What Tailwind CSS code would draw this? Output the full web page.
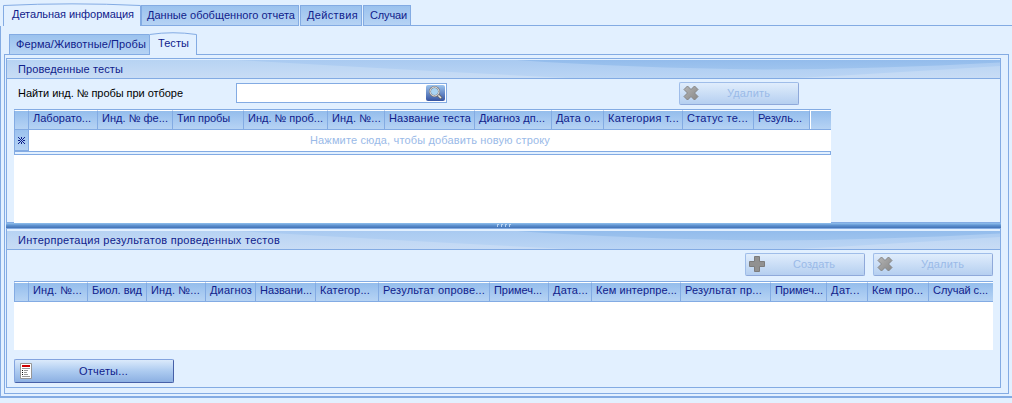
<!DOCTYPE html>
<html lang="ru"><head><meta charset="utf-8"><title>Тесты</title>
<script src="https://cdn.jsdelivr.net/npm/@tailwindcss/browser@4"></script></head>
<body class="w-[1012px] h-[403px] overflow-hidden bg-[#e2f0ff] text-[#10218b] text-[11px] leading-[14px] font-['Liberation_Sans',sans-serif] whitespace-nowrap">
<svg class="absolute size-0"><defs>
<linearGradient id="hb" x2="0" y2="1"><stop stop-color="#93bcec"/><stop offset="1" stop-color="#9fc4ee"/></linearGradient>
<linearGradient id="mb" x2="0" y2="1"><stop stop-color="#a9caf1"/><stop offset="1" stop-color="#bbd5f4"/></linearGradient>
<linearGradient id="lb" x2="0" y2="1"><stop stop-color="#b7d3f3"/><stop offset="1" stop-color="#c8dcf5"/></linearGradient>
<linearGradient id="gr" x2="1" y2="1"><stop stop-color="#b5b5b5"/><stop offset="1" stop-color="#888"/></linearGradient>
<symbol id="swoosh" viewBox="0 0 993 18" preserveAspectRatio="none"><path fill="url(#lb)" d="M0 0H993V18H0z"/><path fill="url(#mb)" d="M230 0H993V6Q880 13 790 18H560Q400 10 230 0z"/><path fill="url(#hb)" d="M510 0H993V2.500Q870 9 760 9.500Q620 8 510 0z"/></symbol>
<symbol id="x" viewBox="0 0 16 16"><path d="M4.500 1L8 4.500 11.500 1 15 4.500 11.500 8 15 11.500 11.500 15 8 11.500 4.500 15 1 11.500 4.500 8 1 4.500z" fill="url(#gr)" stroke="#858585"/></symbol>
</defs></svg>
<div class="flex flex-col h-[403px]">
 <nav class="flex h-[26px] pl-[3px] items-end">
  <div class="relative w-[138px] h-[23px] pl-[9px] pt-[4px]"><svg class="absolute inset-0" width="138" height="23"><path d="M.5 23V2.500Q69-.8 137.500 2.500V23" fill="none" stroke="#83abe3"/></svg><span data-w="122">Детальная информация</span></div>
  <div class="w-[158px] mr-px h-[21px] pl-[5px] pt-[2px] border border-[#83abe3] bg-linear-to-b from-[#9bc2ee] to-[#b6d3f4]"><span data-w="148">Данные обобщенного отчета</span></div>
  <div class="w-[62px] mr-px h-[21px] pl-[6px] pt-[2px] border border-[#83abe3] bg-linear-to-b from-[#9bc2ee] to-[#b6d3f4]"><span data-w="51">Действия</span></div>
  <div class="w-[48px] h-[21px] pl-[6px] pt-[2px] border border-[#83abe3] bg-linear-to-b from-[#9bc2ee] to-[#b6d3f4]"><span data-w="37">Случаи</span></div>
  <div class="flex-1 border-b border-[#83abe3]"></div>
 </nav>
 <main class="h-[372px] border-l border-b-2 border-[#83abe3] pl-[3px] pt-[6px]">
  <nav class="flex items-end h-[23px] pl-[5px]">
   <div class="w-[141px] h-[21px] pl-[6px] pt-[2px] border border-r-0 border-[#83abe3] bg-linear-to-b from-[#9bc2ee] to-[#b6d3f4]"><span data-w="130">Ферма/Животные/Пробы</span></div>
   <div class="relative z-10 w-[48px] h-[23px] -ml-px pl-[9px] pt-[4px] bg-[#e2f0ff]"><svg class="absolute inset-0" width="48" height="23"><path d="M.5 23V2.500Q24-1 47.500 2.500V23" fill="none" stroke="#83abe3"/></svg><span data-w="31">Тесты</span></div>
  </nav>
  <div class="w-[1005px] h-[340px] -mt-px border border-[#83abe3] pl-px pt-[3px]">
   <section class="w-[995px] h-[165px] border border-[#83abe3] pt-px">
    <header class="relative h-[19px] border-b border-[#83abe3] pl-[11px] pt-[2px]"><svg class="absolute inset-0" width="993" height="18"><use href="#swoosh"/></svg><span class="relative" data-w="105">Проведенные тесты</span></header>
    <div class="flex h-[30px] pt-[3px] pl-[11px]">
     <div class="w-[218px] pt-[4px] text-black"><span data-w="165">Найти инд. № пробы при отборе</span></div>
     <div class="w-[211px] h-[20px] mt-px border border-[#83abe3] bg-white flex justify-end p-px">
      <svg width="19" height="16" viewBox="0 0 19 16"><defs><linearGradient id="s" x2="0" y2="1"><stop stop-color="#9cc4ee"/><stop offset="1" stop-color="#3654a2"/></linearGradient></defs><rect width="19" height="16" rx="2" fill="url(#s)"/><path d="M11.500 9.500l4 4" stroke="#666" stroke-width="3"/><path d="M12 10l3 3" stroke="#e8e8e8" stroke-width="1.500"/><circle cx="8.500" cy="6.500" r="4.500" fill="#a9d3f2" stroke="#77777a" stroke-width="2"/><circle cx="8.500" cy="6.500" r="4.500" fill="none" stroke="#e4e4e4"/></svg></div>
     <button class="ml-[232px] w-[120px] h-[23px] pb-px rounded-[2px] border border-[#9fbde9] border-r-[#8fa9da] border-b-[#8fa9da] bg-linear-to-b from-[#e0edfc] to-[#b5cff0] flex items-center text-[#9abae8]"><svg class="ml-[3px]" width="16" height="16"><use href="#x"/></svg><span class="ml-[28px]" data-w="43">Удалить</span></button>
    </div>
    <div class="ml-[7px] w-[817px] h-[114px] bg-white">
     <div id="g1" class="flex h-[21px] border-y border-[#83abe3]"></div>
     <div class="flex h-[21px]"><div class="w-[15px] border border-t-0 border-[#83abe3] bg-linear-to-b from-[#9bc2ee] to-[#b6d3f4] flex justify-center pt-[7px]"><svg width="7" height="7" fill="#10218b"><path d="M0 0h1v1h-1zM6 0h1v1h-1zM3 0h1v1h-1zM1 1h1v1h-1zM5 1h1v1h-1zM3 1h1v1h-1zM2 2h1v1h-1zM4 2h1v1h-1zM0 3h2v1h-2zM3 3h1v1h-1zM5 3h2v1h-2zM2 4h1v1h-1zM4 4h1v1h-1zM1 5h1v1h-1zM3 5h1v1h-1zM5 5h1v1h-1zM0 6h1v1h-1zM3 6h1v1h-1zM6 6h1v1h-1z"/></svg></div><div class="flex-1 text-center pt-[3px] text-[#9abae8]"><span data-w="240">Нажмите сюда, чтобы добавить новую строку</span></div></div>
     <div class="h-[4px] border border-[#83abe3] bg-[#e2f0ff]"></div>
    </div>
   </section>
   <div class="w-[995px] h-[6px] bg-linear-to-b from-[#91c1ee] via-[#5e91cf] to-[#4372b5] border-b border-[#83abe3] flex justify-center gap-[2px] pt-px"><i class="w-[2px] h-[3px] border-l border-t border-[#b9d4f3]"></i><i class="w-[2px] h-[3px] border-l border-t border-[#b9d4f3]"></i><i class="w-[2px] h-[3px] border-l border-t border-[#b9d4f3]"></i><i class="w-[2px] h-[3px] border-l border-t border-[#b9d4f3]"></i></div>
   <section class="w-[995px] h-[159px] border border-t-0 border-[#83abe3] pt-[2px]">
    <header class="relative h-[19px] border-b border-[#83abe3] pl-[11px] pt-[2px]"><svg class="absolute inset-0" width="993" height="18"><use href="#swoosh"/></svg><span class="relative" data-w="262">Интерпретация результатов проведенных тестов</span></header>
    <div class="flex h-[31px] justify-end gap-2 pt-[3px] pr-[7px]">
     <button class="w-[120px] h-[23px] pb-px rounded-[2px] border border-[#9fbde9] border-r-[#8fa9da] border-b-[#8fa9da] bg-linear-to-b from-[#e0edfc] to-[#b5cff0] flex items-center text-[#9abae8]"><svg class="ml-[3px]" width="16" height="16"><path d="M5.500 .5H10.500V5.500H15.500V10.500H10.500V15.500H5.500V10.500H.5V5.500H5.500z" fill="#919191" stroke="#7c7c7c"/></svg><span class="ml-[28px]" data-w="42">Создать</span></button>
     <button class="w-[120px] h-[23px] pb-px rounded-[2px] border border-[#9fbde9] border-r-[#8fa9da] border-b-[#8fa9da] bg-linear-to-b from-[#e0edfc] to-[#b5cff0] flex items-center text-[#9abae8]"><svg class="ml-[3px]" width="16" height="16"><use href="#x"/></svg><span class="ml-[28px]" data-w="43">Удалить</span></button>
    </div>
    <div class="ml-[7px] w-[979px] h-[69px] bg-white"><div id="g2" class="flex h-[21px] border-y border-[#83abe3]"></div></div>
    <button class="ml-[7px] mt-[9px] w-[160px] h-[24px] rounded-[2px] border border-[#83a4df] border-r-[#4660a8] border-b-[#4660a8] bg-linear-to-b from-[#dbeafb] via-[#adcbf0] to-[#8cb0e2] flex items-center"><svg class="ml-[5px]" width="12" height="16"><path fill="#fff" stroke="#969696" d="M.5.500H11.500V15.500H.5z"/><path fill="#c00" d="M2 2H10V4H2z"/><path stroke="#999" d="M2 5.500H10M4 7.500H8M4 9.500H7M4 11.500H8M2 13.500H10"/><path stroke="#111" d="M2 7.500H3M2 9.500H3M2 11.500H3"/></svg><span class="ml-[47px]" data-w="49">Отчеты...</span></button>
   </section>
  </div>
 </main>
</div>
<script>
const head=(id,cols)=>{const g=document.getElementById(id);cols.forEach(([w,t,tw],i)=>{const d=document.createElement('div');
d.className='shrink-0 border-t border-t-white bg-linear-to-b from-[#94bdec] to-[#b6d3f4]';
if(i===0)d.classList.add('border-l','border-l-[#83abe3]');
if(w===1)d.className='shrink-0 bg-white';
else if(i<cols.length-1)d.classList.add('border-r','border-r-[#83abe3]');
d.style.width=w+'px';
if(t){d.classList.add('pl-[4px]');const s=document.createElement('span');s.textContent=t;s.dataset.w=tw;d.append(s)}g.append(d)})};
head('g1',[[15,''],[69,'Лаборато...',58],[75,'Инд. № фе...',66],[71,'Тип пробы',53],[84,'Инд. № проб...',75],[57,'Инд. №...',49],[90,'Название теста',82],[77,'Диагноз дп...',66],[52,'Дата о...',44],[79,'Категория т...',71],[71,'Статус те...',61],[56,'Резуль...',44],[1,''],[20,'']]);
head('g2',[[15,''],[59,'Инд. №...',49],[59,'Биол. вид',50],[59,'Инд. №...',49],[50,'Диагноз',42],[60,'Названи...',52],[63,'Категор...',50],[111,'Результат опрове...',102],[59,'Примеч...',48],[43,'Дата...',35],[89,'Кем интерпре...',81],[90,'Результат пр...',77],[56,'Примеч...',48],[41,'Дат...',29],[61,'Кем про...',51],[64,'Случай с...',55]]);
const c=document.createElement('canvas').getContext('2d');c.font='11px "Liberation Sans"';
for(const s of document.querySelectorAll('[data-w]')){s.style.letterSpacing=((+s.dataset.w-c.measureText(s.textContent).width)/s.textContent.length)+'px'}
</script>
</body></html>
